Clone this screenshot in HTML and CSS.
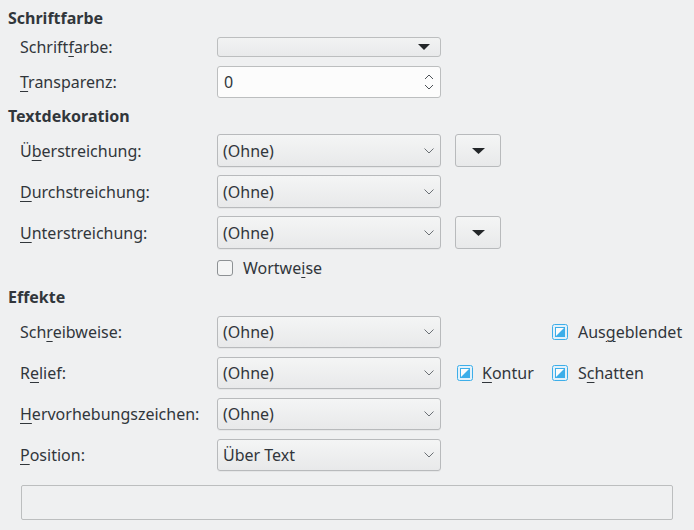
FILE: index.html
```html
<!DOCTYPE html>
<html lang="de">
<head>
<meta charset="utf-8">
<title>Schrifteffekte</title>
<link rel="stylesheet" href="styles.css">
</head>
<body>
<div class="page">
  <div class="title t1">Schriftfarbe</div>
  <div class="form f1">
    <div class="lbl">Schrift<u>f</u>arbe:</div>
    <div class="colorbox"><svg class="tri" width="12" height="6" viewBox="0 0 12 6"><path d="M0 0H12L6 6Z" fill="#232629"/></svg></div>
    <div class="extra"></div>
    <div class="lbl"><u>T</u>ransparenz:</div>
    <div class="spin"><span class="val">0</span>
      <svg class="spinarrows" width="10" height="16" viewBox="0 0 10 16"><path d="M1 5L5 1L9 5M1 11L5 15L9 11" fill="none" stroke="#4d5257" stroke-width="1"/></svg>
    </div>
    <div class="extra"></div>
  </div>

  <div class="title t2">Textdekoration</div>
  <div class="form f2">
    <div class="lbl">Ü<u>b</u>erstreichung:</div>
    <div class="combo"><span>(Ohne)</span><svg class="chev" width="10" height="6" viewBox="0 0 10 6"><path d="M0.5 0.5L5 5L9.5 0.5" fill="none" stroke="#6b7075" stroke-width="1"/></svg></div>
    <div class="extra"><div class="colbtn"><svg width="13" height="6" viewBox="0 0 13 6"><path d="M0 0H13L6.5 6Z" fill="#232629"/></svg></div></div>

    <div class="lbl"><u>D</u>urchstreichung:</div>
    <div class="combo"><span>(Ohne)</span><svg class="chev" width="10" height="6" viewBox="0 0 10 6"><path d="M0.5 0.5L5 5L9.5 0.5" fill="none" stroke="#6b7075" stroke-width="1"/></svg></div>
    <div class="extra"></div>

    <div class="lbl"><u>U</u>nterstreichung:</div>
    <div class="combo"><span>(Ohne)</span><svg class="chev" width="10" height="6" viewBox="0 0 10 6"><path d="M0.5 0.5L5 5L9.5 0.5" fill="none" stroke="#6b7075" stroke-width="1"/></svg></div>
    <div class="extra"><div class="colbtn"><svg width="13" height="6" viewBox="0 0 13 6"><path d="M0 0H13L6.5 6Z" fill="#232629"/></svg></div></div>

    <div class="lbl"></div>
    <div class="check wort"><span class="box plain"></span><span class="ctext">Wortwe<u>i</u>se</span></div>
  </div>

  <div class="title t3">Effekte</div>
  <div class="form f3">
    <div class="lbl">Sch<u>r</u>eibweise:</div>
    <div class="combo"><span>(Ohne)</span><svg class="chev" width="10" height="6" viewBox="0 0 10 6"><path d="M0.5 0.5L5 5L9.5 0.5" fill="none" stroke="#6b7075" stroke-width="1"/></svg></div>
    <div class="extra ex3">
      <div class="check colb"><svg class="box" width="16" height="16" viewBox="0 0 16 16"><rect x="0.5" y="0.5" width="15" height="15" rx="2" fill="#e3f1fa" stroke="#3daee9"/><rect x="3.5" y="3.5" width="9" height="9" fill="#fcfcfc" stroke="#3daee9"/><path d="M13 3V13H3Z" fill="#3daee9"/></svg><span class="ctext">Aus<u>g</u>eblendet</span></div>
    </div>

    <div class="lbl">R<u>e</u>lief:</div>
    <div class="combo"><span>(Ohne)</span><svg class="chev" width="10" height="6" viewBox="0 0 10 6"><path d="M0.5 0.5L5 5L9.5 0.5" fill="none" stroke="#6b7075" stroke-width="1"/></svg></div>
    <div class="extra ex3">
      <div class="check cola"><svg class="box" width="16" height="16" viewBox="0 0 16 16"><rect x="0.5" y="0.5" width="15" height="15" rx="2" fill="#e3f1fa" stroke="#3daee9"/><rect x="3.5" y="3.5" width="9" height="9" fill="#fcfcfc" stroke="#3daee9"/><path d="M13 3V13H3Z" fill="#3daee9"/></svg><span class="ctext"><u>K</u>ontur</span></div>
      <div class="check colb"><svg class="box" width="16" height="16" viewBox="0 0 16 16"><rect x="0.5" y="0.5" width="15" height="15" rx="2" fill="#e3f1fa" stroke="#3daee9"/><rect x="3.5" y="3.5" width="9" height="9" fill="#fcfcfc" stroke="#3daee9"/><path d="M13 3V13H3Z" fill="#3daee9"/></svg><span class="ctext">S<u>c</u>hatten</span></div>
    </div>

    <div class="lbl"><u>H</u>ervorhebungszeichen:</div>
    <div class="combo"><span>(Ohne)</span><svg class="chev" width="10" height="6" viewBox="0 0 10 6"><path d="M0.5 0.5L5 5L9.5 0.5" fill="none" stroke="#6b7075" stroke-width="1"/></svg></div>
    <div class="extra"></div>

    <div class="lbl"><u>P</u>osition:</div>
    <div class="combo"><span>Über Text</span><svg class="chev" width="10" height="6" viewBox="0 0 10 6"><path d="M0.5 0.5L5 5L9.5 0.5" fill="none" stroke="#6b7075" stroke-width="1"/></svg></div>
    <div class="extra"></div>
  </div>

  <div class="preview"></div>
</div>
</body>
</html>
```

FILE: styles.css
```css
html, body {
  margin: 0;
  padding: 0;
  background: #eff0f1;
}
body {
  font-family: "Noto Sans", "DejaVu Sans", sans-serif;
  font-size: 16px;
  color: #31363b;
  width: 694px;
  height: 530px;
  overflow: hidden;
}
.page {
  padding: 6px 0 0 8px;
}
u {
  text-decoration: underline;
  text-decoration-thickness: 1px;
  text-underline-offset: 3px;
}
.title {
  font-weight: 700;
  height: 24px;
  line-height: 24px;
}
.t2 { margin-top: 6px; }
.t3 { margin-top: 6px; }

.form {
  display: grid;
  grid-template-columns: 197px 224px 1fr;
  align-items: center;
  padding-left: 12px;
}
.f1 {
  margin-top: 7px;
  row-gap: 9px;
}
.f2 {
  margin-top: 6px;
  row-gap: 8px;
}
.f3 {
  margin-top: 7px;
  row-gap: 8px;
}
.f3 .combo { height: 32px; }
.f3 { row-gap: 9px; }
.lbl {
  line-height: 20px;
  white-space: nowrap;
}
.colorbox {
  box-sizing: border-box;
  height: 20px;
  border: 1px solid #bcbebf;
  border-radius: 3px;
  background: linear-gradient(#f2f3f3, #e9eaeb);
  display: flex;
  align-items: center;
  justify-content: flex-end;
  padding-right: 10px;
}
.spin {
  box-sizing: border-box;
  height: 32px;
  border: 1px solid #bcbebf;
  border-radius: 3px;
  background: #fcfcfc;
  display: flex;
  align-items: center;
  justify-content: space-between;
  padding: 0 6px 0 6px;
}
.combo {
  box-sizing: border-box;
  height: 33px;
  border: 1px solid #b8babc;
  border-radius: 3px;
  background: linear-gradient(#f4f5f5, #e8e9ea);
  box-shadow: 0 1px 0 rgba(0,0,0,0.04);
  display: flex;
  align-items: center;
  justify-content: space-between;
  padding: 0 6px 0 5px;
  white-space: nowrap;
}
.chev { display: block; }
.extra {
  display: flex;
  align-items: center;
}
.colbtn {
  box-sizing: border-box;
  margin-left: 14px;
  width: 46px;
  height: 33px;
  border: 1px solid #b8babc;
  border-radius: 3px;
  background: linear-gradient(#f4f5f5, #e8e9ea);
  display: flex;
  align-items: center;
  justify-content: center;
}
.check {
  display: flex;
  align-items: center;
  gap: 10px;
  white-space: nowrap;
}
.box { display: block; flex: none; }
.box.plain {
  box-sizing: border-box;
  width: 16px;
  height: 16px;
  border: 1px solid #8d9194;
  border-radius: 3px;
  background: #f4f5f5;
}
.wort {
  height: 22px;
  grid-column: 2 / 4;
}
.ex3 {
  display: grid;
  grid-template-columns: 111px auto;
  align-items: center;
}
.cola {
  grid-column: 1;
  padding-left: 16px;
  gap: 9px;
}
.colb {
  grid-column: 2;
}
.preview {
  box-sizing: border-box;
  margin: 14px 0 0 13px;
  width: 652px;
  height: 35px;
  border: 1px solid #bcbebf;
  border-radius: 2px;
  background: #eff0f1;
}
```
